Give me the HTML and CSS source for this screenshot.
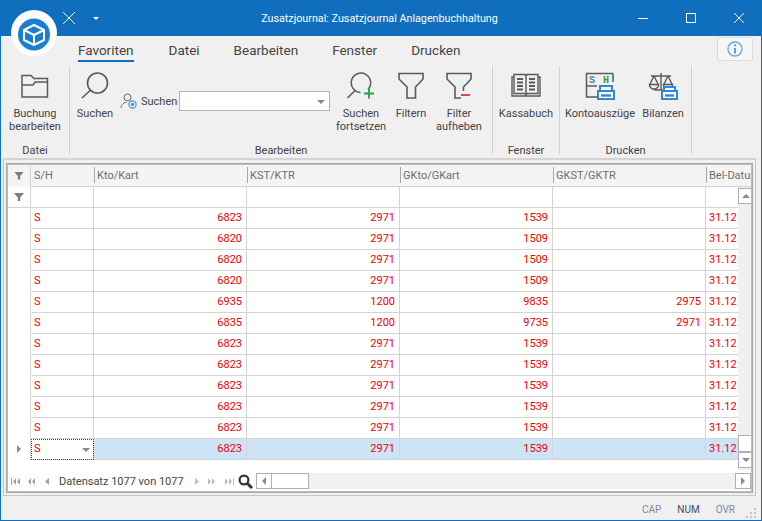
FILE: index.html
```html
<!DOCTYPE html>
<html lang="de">
<head>
    <meta charset="UTF-8">
    <title>Zusatzjournal</title>
    <link rel="stylesheet" href="styles.css">
</head>
<body>
<div class="window">
    <header class="titlebar">
        <div class="qat">
            <svg width="14" height="14" viewBox="0 0 14 14"><path d="M1 1 L13 13 M13 1 L1 13" stroke="#fff" stroke-width="1" fill="none"/></svg>
            <span class="qat-arrow"></span>
        </div>
        <div class="title">Zusatzjournal: Zusatzjournal Anlagenbuchhaltung</div>
        <div class="winbtns">
            <svg width="12" height="12" viewBox="0 0 12 12"><path d="M1 6.5 H11" stroke="#fff" fill="none"/></svg>
            <svg width="12" height="12" viewBox="0 0 12 12"><rect x="1.5" y="1.5" width="9" height="9" stroke="#fff" fill="none"/></svg>
            <svg width="12" height="12" viewBox="0 0 12 12"><path d="M1 1 L11 11 M11 1 L1 11" stroke="#fff" fill="none"/></svg>
        </div>
    </header>

    <!-- Logo liegt ueber Titelleiste und Ribbon -->
    <div class="logo">
        <svg width="46" height="46" viewBox="0 0 46 46">
            <circle cx="23" cy="24.5" r="16" fill="#1a7fd0"/>
            <path d="M23 15 L33 20 V30 L23 35 L13 30 V20 Z M13 20 L23 25 L33 20 M23 25 V35" fill="none" stroke="#fff" stroke-width="2" stroke-linejoin="round"/>
        </svg>
    </div>

    <nav class="tabs">
        <span class="tab active">Favoriten</span>
        <span class="tab">Datei</span>
        <span class="tab">Bearbeiten</span>
        <span class="tab">Fenster</span>
        <span class="tab">Drucken</span>
        <span class="info">
            <svg width="16" height="16" viewBox="0 0 16 16"><circle cx="8" cy="8" r="7" fill="none" stroke="#62a8e0" stroke-width="1.3"/><path d="M8 3.5 V5.2 M8 7 V12.5" stroke="#2f8ad4" stroke-width="1.6" fill="none"/></svg>
        </span>
    </nav>

    <section class="ribbon">
        <div class="group g-datei">
            <div class="items">
                <div class="rbtn w-66">
                    <svg class="ic" width="30" height="28" viewBox="0 0 30 28"><path d="M2 25 V3.5 H11 L14 6.5 H27.5 V25 Z M2 13 H13 L15 10 H27.5" fill="none" stroke="#5a5a5a" stroke-width="1.5"/></svg>
                    <span>Buchung<br>bearbeiten</span>
                </div>
            </div>
            <div class="glabel">Datei</div>
        </div>
        <div class="group g-bearb">
            <div class="items">
                <div class="rbtn w-40">
                    <svg class="ic" width="30" height="28" viewBox="0 0 30 28"><circle cx="17.5" cy="11" r="10" fill="none" stroke="#5a5a5a" stroke-width="1.6"/><path d="M10.5 18 L2 26" stroke="#5a5a5a" stroke-width="1.6" fill="none"/></svg>
                    <span>Suchen</span>
                </div>
                <div class="searchbox">
                    <svg width="18" height="18" viewBox="0 0 18 18"><circle cx="7.5" cy="5.5" r="3.5" fill="none" stroke="#666"/><path d="M1 16 C1.5 12 4 10.5 6.5 10.5" fill="none" stroke="#666"/><circle cx="12.5" cy="12.5" r="3.6" fill="none" stroke="#3f97dc" stroke-width="1.2"/><circle cx="12.5" cy="12.5" r="1.7" fill="#3f97dc"/></svg>
                    <span class="slabel">Suchen</span>
                    <div class="combo"><i class="arrow-down"></i></div>
                </div>
                <div class="rbtn w-58">
                    <svg class="ic" width="30" height="28" viewBox="0 0 30 28"><path d="M22 17.5 A9.7 9.7 0 1 0 14.5 20.5" fill="none" stroke="#5a5a5a" stroke-width="1.5"/><path d="M9.5 18 L1.5 26" stroke="#5a5a5a" stroke-width="1.6" fill="none"/><path d="M23 16.5 V26.5 M18 21.5 H28" stroke="#2f9a4a" stroke-width="1.8" fill="none"/></svg>
                    <span>Suchen<br>fortsetzen</span>
                </div>
                <div class="rbtn w-42">
                    <svg class="ic" width="28" height="28" viewBox="0 0 28 28"><path d="M2 1.5 H26 V7 L18.5 15 V26 H10 V15 L2 7 Z" fill="none" stroke="#5a5a5a" stroke-width="1.6"/></svg>
                    <span>Filtern</span>
                </div>
                <div class="rbtn w-54">
                    <svg class="ic" width="28" height="28" viewBox="0 0 28 28"><path d="M18.5 19 V15 L26 7 V1.5 H2 V7 L10 15 V26 H16" fill="none" stroke="#5a5a5a" stroke-width="1.6"/><path d="M16 23 H25" stroke="#e0474c" stroke-width="2" fill="none"/></svg>
                    <span>Filter<br>aufheben</span>
                </div>
            </div>
            <div class="glabel">Bearbeiten</div>
        </div>
        <div class="group g-fenster">
            <div class="items">
                <div class="rbtn w-66">
                    <svg class="ic" width="30" height="28" viewBox="0 0 30 28"><path d="M3 5 H1 V24 H29 V5 H27 M3 2.5 H14 L15 4 L16 2.5 H27 V21.5 H16 L15 23 L14 21.5 H3 Z M15 4 V21" fill="none" stroke="#5a5a5a" stroke-width="1.4"/><path d="M6 7 H12 M6 10.5 H12 M6 14 H12 M6 17.5 H12 M18 7 H24 M18 10.5 H24 M18 14 H24 M18 17.5 H24" stroke="#5a5a5a" stroke-width="2" fill="none"/></svg>
                    <span>Kassabuch</span>
                </div>
            </div>
            <div class="glabel">Fenster</div>
        </div>
        <div class="group g-druck">
            <div class="items">
                <div class="rbtn w-74">
                    <svg class="ic" width="30" height="28" viewBox="0 0 30 28"><path d="M17 1.5 H1.5 V25 H12 M28 1.5 H17 M28 1.5 V10 M1.5 14 H12" fill="none" stroke="#5a5a5a" stroke-width="1.5"/><text x="4" y="11" class="ic-s">S</text><text x="18" y="11" class="ic-h">H</text><path d="M15 19 V14 H27 V19 M13 27 V19 H29 V27 Z" fill="#fff" stroke="#2f8ad4" stroke-width="2"/><path d="M16 23.5 H26" stroke="#2f8ad4" stroke-width="2.4" fill="none"/></svg>
                    <span>Kontoauszüge</span>
                </div>
                <div class="rbtn w-50">
                    <svg class="ic" width="30" height="28" viewBox="0 0 30 28"><path d="M3 4 H23 M13 1 V18 M6 18 H19 M6 4 L2 12 M6 4 L10 12 M20 4 L16 12 M20 4 L24 12" fill="none" stroke="#5a5a5a" stroke-width="1.4"/><path d="M1.5 12.5 H10.5 A4.5 4.5 0 0 1 1.5 12.5 Z M15.5 12.5 H24.5 A4.5 4.5 0 0 1 15.5 12.5 Z" fill="none" stroke="#5a5a5a" stroke-width="1.5"/><path d="M16 19 V15 H27 V19 M14 27 V19 H29 V27 Z" fill="#fff" stroke="#2f8ad4" stroke-width="2"/><path d="M17 23.5 H26" stroke="#2f8ad4" stroke-width="2.4" fill="none"/></svg>
                    <span>Bilanzen</span>
                </div>
            </div>
            <div class="glabel">Drucken</div>
        </div>
    </section>

    <main class="frame">
        <div class="grid">
            <div class="row head">
                <div class="cell ind"><i class="funnel"></i></div>
                <div class="cell">S/H</div>
                <div class="cell">Kto/Kart</div>
                <div class="cell">KST/KTR</div>
                <div class="cell">GKto/GKart</div>
                <div class="cell">GKST/GKTR</div>
                <div class="cell last">Bel-Datum</div>
            </div>
            <div class="mid">
                <div class="rows">
                    <div class="row filter"><div class="cell ind"><i class="funnel"></i></div><div class="cell"></div><div class="cell"></div><div class="cell"></div><div class="cell"></div><div class="cell"></div><div class="cell"></div></div>
                    <div class="row"><div class="cell ind"></div><div class="cell">S</div><div class="cell num">6823</div><div class="cell num">2971</div><div class="cell num">1539</div><div class="cell num"></div><div class="cell">31.12</div></div>
                    <div class="row"><div class="cell ind"></div><div class="cell">S</div><div class="cell num">6820</div><div class="cell num">2971</div><div class="cell num">1509</div><div class="cell num"></div><div class="cell">31.12</div></div>
                    <div class="row"><div class="cell ind"></div><div class="cell">S</div><div class="cell num">6820</div><div class="cell num">2971</div><div class="cell num">1509</div><div class="cell num"></div><div class="cell">31.12</div></div>
                    <div class="row"><div class="cell ind"></div><div class="cell">S</div><div class="cell num">6820</div><div class="cell num">2971</div><div class="cell num">1509</div><div class="cell num"></div><div class="cell">31.12</div></div>
                    <div class="row"><div class="cell ind"></div><div class="cell">S</div><div class="cell num">6935</div><div class="cell num">1200</div><div class="cell num">9835</div><div class="cell num">2975</div><div class="cell">31.12</div></div>
                    <div class="row"><div class="cell ind"></div><div class="cell">S</div><div class="cell num">6835</div><div class="cell num">1200</div><div class="cell num">9735</div><div class="cell num">2971</div><div class="cell">31.12</div></div>
                    <div class="row"><div class="cell ind"></div><div class="cell">S</div><div class="cell num">6823</div><div class="cell num">2971</div><div class="cell num">1539</div><div class="cell num"></div><div class="cell">31.12</div></div>
                    <div class="row"><div class="cell ind"></div><div class="cell">S</div><div class="cell num">6823</div><div class="cell num">2971</div><div class="cell num">1539</div><div class="cell num"></div><div class="cell">31.12</div></div>
                    <div class="row"><div class="cell ind"></div><div class="cell">S</div><div class="cell num">6823</div><div class="cell num">2971</div><div class="cell num">1539</div><div class="cell num"></div><div class="cell">31.12</div></div>
                    <div class="row"><div class="cell ind"></div><div class="cell">S</div><div class="cell num">6823</div><div class="cell num">2971</div><div class="cell num">1539</div><div class="cell num"></div><div class="cell">31.12</div></div>
                    <div class="row"><div class="cell ind"></div><div class="cell">S</div><div class="cell num">6823</div><div class="cell num">2971</div><div class="cell num">1539</div><div class="cell num"></div><div class="cell">31.12</div></div>
                    <div class="row current"><div class="cell ind"><i class="tri-r"></i></div><div class="cell editor">S<i class="arrow-down"></i></div><div class="cell num">6823</div><div class="cell num">2971</div><div class="cell num">1539</div><div class="cell num"></div><div class="cell">31.12</div></div>
                </div>
                <div class="vscroll">
                    <div class="sbtn"><i class="tri-u"></i></div>
                    <div class="track"></div>
                    <div class="sthumb"></div>
                    <div class="sbtn"><i class="arrow-down"></i></div>
                </div>
            </div>
            <div class="navbar">
                <div class="pager">
                    <svg class="nav n1" width="9" height="7" viewBox="0 0 9 7"><path d="M0 0h1v7H0z M5 0v7L2 3.5z M9 0v7L6 3.5z"/></svg>
                    <svg class="nav n2" width="7" height="7" viewBox="0 0 7 7"><path d="M3 0v7L0 3.5z M7 0v7L4 3.5z"/></svg>
                    <svg class="nav n3" width="4" height="7" viewBox="0 0 4 7"><path d="M4 0v7L0 3.5z"/></svg>
                    <span class="rec">Datensatz 1077 von 1077</span>
                    <svg class="nav pale n4" width="4" height="7" viewBox="0 0 4 7"><path d="M0 0v7L4 3.5z"/></svg>
                    <svg class="nav pale n2" width="7" height="7" viewBox="0 0 7 7"><path d="M0 0v7L3 3.5z M4 0v7L7 3.5z"/></svg>
                    <svg class="nav pale n5" width="9" height="7" viewBox="0 0 9 7"><path d="M0 0v7L3 3.5z M4 0v7L7 3.5z M8 0h1v7H8z"/></svg>
                </div>
                <svg class="lens" width="15" height="15" viewBox="0 0 15 15"><circle cx="6" cy="6" r="4.4" fill="none" stroke="#333" stroke-width="2.2"/><path d="M9.5 9.5 L14 14" stroke="#333" stroke-width="3" fill="none"/></svg>
                <div class="hscroll">
                    <div class="sbtn"><i class="tri-l"></i></div>
                    <div class="hthumb"></div>
                    <div class="track"></div>
                    <div class="sbtn"><i class="tri-r"></i></div>
                </div>
            </div>
        </div>
    </main>

    <footer class="status">
        <span class="key">CAP</span>
        <span class="key on">NUM</span>
        <span class="key">OVR</span>
        <svg class="grip" width="11" height="11" viewBox="0 0 11 11"><path d="M8 0h2v2H8z M4 4h2v2H4z M8 4h2v2H8z M0 8h2v2H0z M4 8h2v2H4z M8 8h2v2H8z" fill="#c4c4c4"/></svg>
    </footer>
</div>
</body>
</html>
```

FILE: styles.css
```css
* {
    box-sizing: border-box;
}
html, body {
    margin: 0;
    height: 100%;
}
body {
    font-family: Roboto, 'Noto Sans', sans-serif;
    font-size: 11px;
    color: #444;
    overflow: hidden;
}
.window {
    position: relative;
    width: 762px;
    height: 521px;
    display: flex;
    flex-direction: column;
    background-color: #f0f0f0;
    border: 1px solid #106ebe;
    border-top: none;
}

/* Titelleiste */
.logo {
    position: absolute;
    left: 10px;
    top: 10px;
    width: 46px;
    height: 46px;
    border-radius: 50%;
    background-color: #fff;
}
.titlebar {
    height: 36px;
    flex: none;
    margin: 0 -1px;
    background-color: #106ebe;
    color: #fff;
    display: flex;
    align-items: center;
}
.qat {
    display: flex;
    align-items: center;
    margin-left: 62px;
    gap: 17px;
}
.qat-arrow {
    width: 0;
    height: 0;
    border: 3px solid transparent;
    border-top-color: #fff;
    border-bottom: none;
}
.title {
    flex: 1;
    text-align: center;
    font-size: 10.75px;
    padding-left: 23px;
}
.winbtns {
    display: flex;
    gap: 36px;
    margin-right: 17px;
}

/* Tabs */
.tabs {
    height: 28px;
    flex: none;
    display: flex;
    align-items: flex-start;
    padding-left: 77px;
}
.tab {
    font-size: 13.5px;
    line-height: 18px;
    margin-top: 5px;
    margin-right: 34px;
    padding-bottom: 1px;
    color: #444;
}
.tab.active {
    border-bottom: 2px solid #106ebe;
    margin-right: 35px;
}
.info {
    margin-left: auto;
    margin-right: 8px;
    margin-top: 1px;
    width: 36px;
    height: 24px;
    background-color: #f6f6f6;
    border: 1px solid #dcdcdc;
    border-radius: 2px;
    display: flex;
    align-items: center;
    justify-content: center;
}

/* Ribbon */
.ribbon {
    height: 92px;
    flex: none;
    display: flex;
    padding-top: 2px;
}
.group {
    display: flex;
    flex-direction: column;
    border-right: 1px solid #d0d0d0;
    height: 88px;
}
.g-datei { width: 69px; }
.g-bearb { width: 423px; }
.g-fenster { width: 67px; }
.g-druck { width: 132px; }
.items {
    flex: 1;
    display: flex;
    padding-top: 6px;
    justify-content: center;
}
.g-bearb .items {
    justify-content: flex-start;
    padding-left: 5px;
}
.glabel {
    height: 10px;
    line-height: 10px;
    margin-bottom: -2px;
    text-align: center;
}
.rbtn {
    display: flex;
    flex-direction: column;
    align-items: center;
    text-align: center;
    line-height: 13px;
    white-space: nowrap;
}
.rbtn .ic {
    height: 28px;
    margin-bottom: 7px;
}
.ic-s, .ic-h {
    font-family: 'Liberation Mono', monospace;
    font-size: 10px;
    font-weight: bold;
}
.ic-s { fill: #2f8ad4; }
.ic-h { fill: #2f9a4a; }
.w-40 { width: 40px; }
.w-42 { width: 42px; }
.w-50 { width: 62px; }
.w-54 { width: 54px; }
.w-58 { width: 58px; }
.w-66 { width: 66px; }
.w-74 { width: 72px; }
.g-druck .items {
    justify-content: flex-start;
    padding-left: 5px;
}
.searchbox {
    display: flex;
    align-items: center;
    height: 20px;
    margin-top: 19px;
    margin-left: 5px;
    width: 212px;
}
.slabel {
    width: 41px;
    padding-left: 3px;
    flex: none;
}
.combo {
    width: 151px;
    flex: none;
    height: 20px;
    background-color: #fff;
    border: 1px solid #b4b4b4;
    position: relative;
}
.combo .arrow-down {
    position: absolute;
    right: 4px;
    top: 8px;
}
.arrow-down {
    display: inline-block;
    width: 0;
    height: 0;
    border: 4px solid transparent;
    border-top: 4px solid #8a8a8a;
    border-bottom: none;
}

/* Grid */
.frame {
    margin: 2px 5px 0 2px;
    height: 338px;
    flex: none;
    border: 1px solid #c6c6c6;
    border-top: 2px solid #d4d4d4;
    padding: 4px 3px 3px;
}
.grid {
    height: 100%;
    border: 1px solid #bdbdbd;
    background-color: #fff;
    outline: 1px solid #a8a8a8;
    display: flex;
    flex-direction: column;
    color: #f00000;
    overflow: hidden;
}
.row {
    display: grid;
    grid-template-columns: 23px 63px 153px 153px 153px 153px 153px;
    height: 21px;
    flex: none;
}
.cell {
    border-right: 1px solid #d4d4d4;
    border-bottom: 1px solid #d4d4d4;
    padding: 0 3px;
    line-height: 20px;
    white-space: nowrap;
    overflow: hidden;
    position: relative;
}
.num {
    text-align: right;
    padding-right: 4px;
}
.ind {
    display: flex;
    align-items: center;
    justify-content: center;
    border-bottom-color: transparent;
}
.head {
    height: 22px;
    background-color: #f4f4f4;
    color: #6d6d6d;
}
.head .cell {
    border-right: none;
    line-height: 21px;
}
/* kurze Trennstriche im Kopf */
.head .cell::before {
    content: "";
    position: absolute;
    left: 0;
    top: 2px;
    bottom: 3px;
    width: 1px;
    background-color: #a8a8a8;
}
.head .cell.ind {
    border-right: 1px solid #d4d4d4;
}
.head .cell.ind::before,
.head .cell:nth-child(2)::before {
    display: none;
}
.filter .ind {
    border-bottom-color: #d4d4d4;
}
.funnel {
    width: 10px;
    height: 8px;
    background-color: #7d7d7d;
    clip-path: polygon(0 0, 100% 0, 62% 55%, 62% 100%, 38% 100%, 38% 55%);
}
.mid {
    display: flex;
    flex: none;
    height: 283px;
}
.rows {
    flex: none;
    width: 730px;
    overflow: hidden;
}
.current .cell {
    background-color: #cde4f7;
}
.current .ind {
    background-color: #fff;
}
.current .editor {
    background-color: #fff;
    outline: 1px dotted #f00000;
    outline-offset: -1px;
}
.editor .arrow-down {
    position: absolute;
    right: 3px;
    top: 9px;
}
.vscroll {
    width: 16px;
    flex: none;
    display: flex;
    flex-direction: column;
    background-color: #f0f0f0;
    padding: 1px 0 2px;
}
.sbtn {
    width: 16px;
    height: 16px;
    flex: none;
    background-color: #fff;
    border: 1px solid #b0b0b0;
    display: flex;
    align-items: center;
    justify-content: center;
}
.sthumb {
    height: 17px;
    flex: none;
    background-color: #fff;
    border: 1px solid #b0b0b0;
}
.track {
    flex: 1;
    background-color: #f0f0f0;
}
.tri-u {
    width: 0;
    height: 0;
    border: 4px solid transparent;
    border-bottom-color: #8a8a8a;
    border-top: none;
}
.tri-r {
    display: inline-block;
    width: 0;
    height: 0;
    border: 4px solid transparent;
    border-left-color: #8a8a8a;
    border-right: none;
}
.tri-l {
    width: 0;
    height: 0;
    border: 4px solid transparent;
    border-right-color: #8a8a8a;
    border-left: none;
}
.navbar {
    flex: 1;
    display: flex;
    align-items: center;
    padding-top: 1px;
    color: #444;
}
.pager {
    display: flex;
    align-items: center;
    padding-left: 3px;
    width: 230px;
    flex: none;
}
.rec {
    width: 126px;
    margin: 0 10px 0 10px;
    white-space: nowrap;
}
.nav {
    flex: none;
    fill: #a0a0a0;
}
.pale {
    fill: #bdbdbd;
}
.n1 { margin-right: 8px; }
.n2 { margin-right: 10px; }
.n3 { margin-right: 0; }
.n4 { margin-right: 9px; }
.n5 { margin-right: 0; }
.lens {
    flex: none;
}
.hscroll {
    display: flex;
    margin-left: 3px;
    width: 498px;
    height: 16px;
    background-color: #f0f0f0;
}
.hthumb {
    width: 37px;
    background-color: #fff;
    border: 1px solid #b0b0b0;
    border-left: none;
}

/* Statuszeile */
.status {
    flex: 1;
    display: flex;
    align-items: center;
    justify-content: flex-end;
    padding-top: 2px;
    padding-right: 4px;
    gap: 16px;
    font-size: 10px;
    color: #7e8b98;
}
.key.on {
    color: #3f4f63;
}
.grip {
    margin-left: -5px;
    margin-top: 8px;
}
```
